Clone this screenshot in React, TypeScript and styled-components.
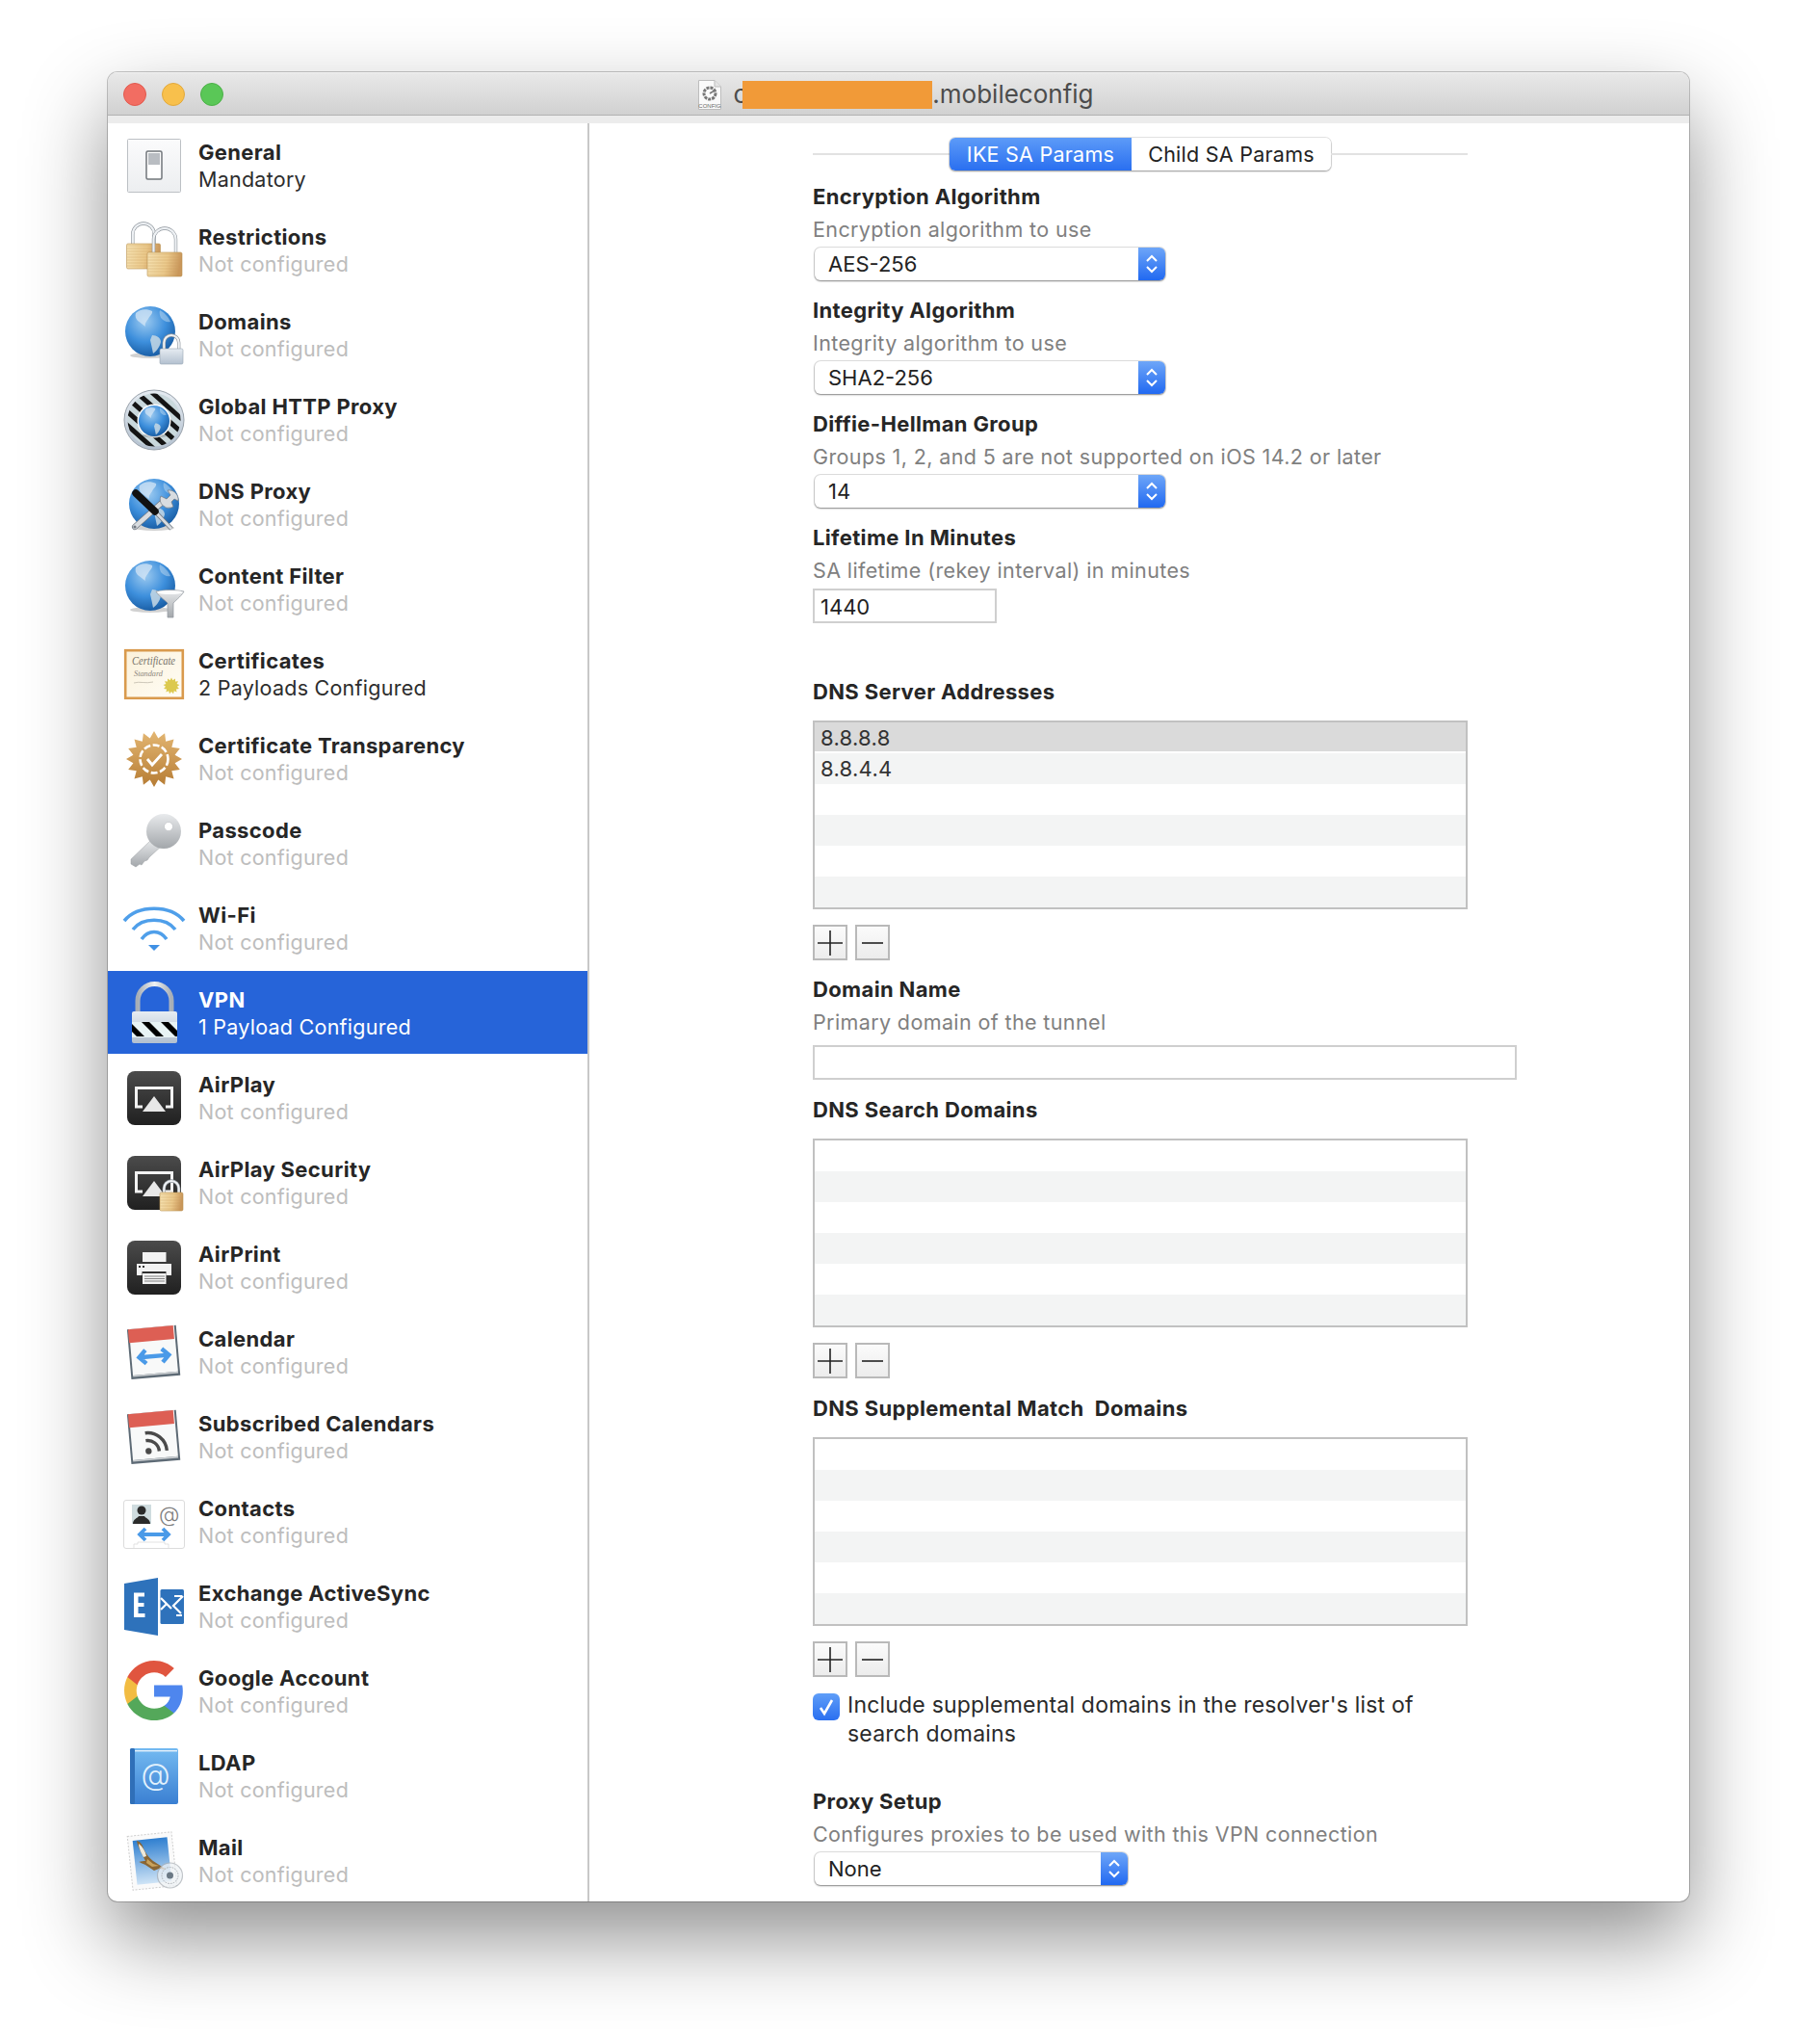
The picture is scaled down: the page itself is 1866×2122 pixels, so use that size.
import React from "react";
import styled, { createGlobalStyle } from "styled-components";

const Global = createGlobalStyle`
  html, body { margin: 0; padding: 0; background: #fff; }
  body { font-family: Inter, "Noto Sans", "Liberation Sans", sans-serif; color: #262626; }
  #root { height: 2122px; overflow: hidden; }
`;

const Page = styled.div`
  height: 2122px;
  padding: 75px 112px 0;
  box-sizing: border-box;
`;
const Window = styled.div`
  width: 1642px;
  height: 1899px;
  border-radius: 10px;
  background: #fff;
  overflow: hidden;
  display: flex;
  flex-direction: column;
  box-shadow: 0 38px 85px rgba(0, 0, 0, 0.44), 0 0 0 1px rgba(0, 0, 0, 0.22);
`;
const TitleBar = styled.header`
  flex: none;
  height: 45px;
  box-sizing: border-box;
  display: grid;
  grid-template-columns: 1fr auto 1fr;
  align-items: center;
  background: linear-gradient(#e9e9e9, #d1d1d1);
  border-bottom: 1px solid #b1b1b1;
  box-shadow: inset 0 1px 0 #f2f2f2;
`;
const Lights = styled.div`
  display: flex;
  gap: 16px;
  padding: 1px 0 0 16px;
`;
const Light = styled.span<{ $c: string; $b: string }>`
  width: 24px;
  height: 24px;
  border-radius: 50%;
  box-sizing: border-box;
  background: ${(p) => p.$c};
  border: 1px solid ${(p) => p.$b};
`;
const WindowTitle = styled.div`
  display: flex;
  align-items: center;
  font-size: 26px;
  color: #4c4c4c;
  line-height: 30px;
  padding: 2px 6px 0 0;
`;
const FileGlyph = styled.svg`
  width: 26px;
  height: 33px;
  margin-right: 11px;
`;
const Redaction = styled.span`
  display: block;
  width: 197px;
  height: 29px;
  margin-left: -5px;
  background: #f19a38;
`;
const Band = styled.div`
  flex: none;
  height: 8px;
  background: #ececec;
`;
const Main = styled.div`
  flex: 1;
  min-height: 0;
  display: flex;
`;
const Sidebar = styled.nav`
  flex: none;
  width: 500px;
  box-sizing: border-box;
  border-right: 2px solid #c8c8c8;
  overflow: hidden;
`;
const Row = styled.div<{ $sel?: boolean }>`
  display: flex;
  align-items: center;
  height: 86px;
  box-sizing: border-box;
  padding-top: 2px;
  margin-bottom: 2px;
  background: ${(p) => (p.$sel ? "#2664d9" : "transparent")};
`;
const IconSvg = styled.svg`
  flex: none;
  width: 70px;
  height: 70px;
  margin-left: 13px;
  overflow: visible;
`;
const RowText = styled.div`
  margin-left: 11px;
`;
const RowTitle = styled.div<{ $sel?: boolean }>`
  font-size: 22px;
  font-weight: 700;
  line-height: 28px;
  letter-spacing: 0.35px;
  color: ${(p) => (p.$sel ? "#fff" : "#262626")};
`;
const RowSub = styled.div<{ $tone: "off" | "on" | "sel" }>`
  font-size: 21.5px;
  line-height: 29px;
  letter-spacing: 0.25px;
  color: ${(p) => (p.$tone === "off" ? "#bdbdbd" : p.$tone === "sel" ? "#fff" : "#2d2d2d")};
`;
const Pane = styled.section`
  flex: 1;
  min-width: 0;
  padding-left: 232px;
  overflow: hidden;
`;
const TabRow = styled.div`
  width: 680px;
  height: 34px;
  margin-top: 15px;
  display: flex;
  align-items: center;
`;
const TabLine = styled.div`
  flex: 1;
  height: 2px;
  background: #e2e2e2;
`;
const Tabs = styled.div`
  display: flex;
  height: 34px;
  border-radius: 6px;
  overflow: hidden;
  box-shadow: 0 1px 2px rgba(0, 0, 0, 0.35), 0 0 0 1px rgba(0, 0, 0, 0.1);
`;
const Tab = styled.div<{ $on?: boolean }>`
  display: flex;
  align-items: center;
  justify-content: center;
  box-sizing: border-box;
  width: ${(p) => (p.$on ? 189 : 207)}px;
  font-size: 21.5px;
  letter-spacing: 0.25px;
  color: ${(p) => (p.$on ? "#fff" : "#222")};
  background: ${(p) => (p.$on ? "linear-gradient(#5d9bf8, #2a6ff0)" : "#fff")};
`;
const Heading = styled.div<{ $mt: number }>`
  margin-top: ${(p) => p.$mt}px;
  font-size: 22px;
  font-weight: 700;
  line-height: 30px;
  letter-spacing: 0.35px;
  color: #262626;
`;
const Hint = styled.div`
  margin-top: 4px;
  font-size: 21.5px;
  line-height: 30px;
  letter-spacing: 0.38px;
  color: #808080;
`;
const Select = styled.div<{ $w: number }>`
  margin: 4px 0 0 2px;
  width: ${(p) => p.$w}px;
  height: 34px;
  display: flex;
  align-items: center;
  border-radius: 6px;
  overflow: hidden;
  background: #fff;
  box-shadow: 0 1px 2px rgba(0, 0, 0, 0.4), 0 0 0 1px rgba(0, 0, 0, 0.12);
`;
const SelectValue = styled.div`
  flex: 1;
  padding-left: 14px;
  font-size: 22px;
  color: #222;
`;
const SelectArrow = styled.div`
  width: 28px;
  height: 34px;
  display: flex;
  align-items: center;
  justify-content: center;
  background: linear-gradient(#6ea6f8, #2169f1);
`;
const TextField = styled.div<{ $w: number; $mt: number }>`
  margin-top: ${(p) => p.$mt}px;
  width: ${(p) => p.$w}px;
  height: 36px;
  box-sizing: border-box;
  border: 2px solid #cfcfcf;
  padding: 1px 0 0 6px;
  font-size: 22px;
  line-height: 32px;
  color: #222;
`;
const List = styled.div<{ $mt: number }>`
  margin-top: ${(p) => p.$mt}px;
  width: 680px;
  height: 196px;
  box-sizing: border-box;
  border: 2px solid #c1c1c1;
`;
const ListRow = styled.div<{ $alt: boolean; $sel?: boolean }>`
  height: 32px;
  box-sizing: border-box;
  padding: 1px 0 0 6px;
  font-size: 22px;
  line-height: 30px;
  letter-spacing: 0.3px;
  color: #333;
  background: ${(p) => (p.$sel ? "#dadada" : p.$alt ? "#f3f4f4" : "#fff")};
  border-bottom: ${(p) => (p.$sel ? "2px solid #fff" : "none")};
`;
const Stepper = styled.div`
  margin-top: 16px;
  display: flex;
  gap: 8px;
`;
const StepButton = styled.div`
  width: 36px;
  height: 37px;
  box-sizing: border-box;
  border: 2px solid #b9b9b9;
  display: flex;
  align-items: center;
  justify-content: center;
  background: linear-gradient(#fbfbfb, #ececec);
`;
const CheckRow = styled.div`
  margin-top: 17px;
  display: flex;
  width: 640px;
`;
const CheckBox = styled.div`
  flex: none;
  width: 28px;
  height: 28px;
  border-radius: 6px;
  display: flex;
  align-items: center;
  justify-content: center;
  background: linear-gradient(#5f9ef8, #2a6ff0);
`;
const CheckLabel = styled.div`
  margin: -3px 0 0 8px;
  font-size: 23px;
  line-height: 30px;
  letter-spacing: 0.2px;
  color: #2a2a2a;
`;
const Defs = styled.svg`
  position: absolute;
  width: 0;
  height: 0;
`;

const star = (cx: number, cy: number, R: number, r: number, n: number) =>
  Array.from({ length: n * 2 }, (_, i) => {
    const a = (Math.PI * i) / n - Math.PI / 2;
    const q = i % 2 ? r : R;
    return `${(cx + q * Math.cos(a)).toFixed(1)},${(cy + q * Math.sin(a)).toFixed(1)}`;
  }).join(" ");

const SharedDefs = () => (
  <Defs aria-hidden="true">
    <defs>
      <radialGradient id="globeG" cx="40%" cy="30%" r="75%">
        <stop offset="0" stopColor="#9ccaf0" />
        <stop offset="0.55" stopColor="#3d8fdc" />
        <stop offset="1" stopColor="#15589f" />
      </radialGradient>
      <linearGradient id="goldG" x1="0" y1="0" x2="1" y2="0.15">
        <stop offset="0" stopColor="#f6e3b4" />
        <stop offset="0.6" stopColor="#ebc98b" />
        <stop offset="1" stopColor="#c9965a" />
      </linearGradient>
      <linearGradient id="silverG" x1="0" y1="0" x2="0" y2="1">
        <stop offset="0" stopColor="#e6ecf2" />
        <stop offset="1" stopColor="#b3c0cf" />
      </linearGradient>
      <linearGradient id="shackleG" x1="0" y1="0" x2="1" y2="0">
        <stop offset="0" stopColor="#a7aeb6" />
        <stop offset="0.5" stopColor="#eef1f4" />
        <stop offset="1" stopColor="#a7aeb6" />
      </linearGradient>
      <linearGradient id="darkG" x1="0" y1="0" x2="0" y2="1">
        <stop offset="0" stopColor="#4b4b4b" />
        <stop offset="1" stopColor="#202020" />
      </linearGradient>
      <linearGradient id="keyG" x1="0" y1="0" x2="0" y2="1">
        <stop offset="0" stopColor="#e8eaec" />
        <stop offset="1" stopColor="#a3a7ab" />
      </linearGradient>
      <linearGradient id="bronzeG" x1="0" y1="0" x2="0" y2="1">
        <stop offset="0" stopColor="#e3b672" />
        <stop offset="1" stopColor="#b67c34" />
      </linearGradient>
      <linearGradient id="bookG" x1="0" y1="0" x2="0" y2="1">
        <stop offset="0" stopColor="#74baf1" />
        <stop offset="1" stopColor="#3a7fd2" />
      </linearGradient>
      <linearGradient id="skyG" x1="0" y1="0" x2="0" y2="1">
        <stop offset="0" stopColor="#2f7fd0" />
        <stop offset="1" stopColor="#cfe4f6" />
      </linearGradient>
      <linearGradient id="switchG" x1="0" y1="0" x2="0" y2="1">
        <stop offset="0" stopColor="#fbfbfc" />
        <stop offset="1" stopColor="#eceef0" />
      </linearGradient>
      <linearGradient id="certG" x1="0" y1="0" x2="1" y2="1">
        <stop offset="0" stopColor="#fbf1da" />
        <stop offset="1" stopColor="#fffdf6" />
      </linearGradient>
    </defs>
  </Defs>
);

const Globe = ({ cx, cy, r }: { cx: number; cy: number; r: number }) => (
  <g transform={`translate(${cx - r} ${cy - r}) scale(${r / 26})`}>
    <ellipse cx="26" cy="51" rx="21" ry="3" fill="#000" opacity="0.18" />
    <circle cx="26" cy="26" r="26" fill="url(#globeG)" />
    <path d="M11 7C15 3 22 2 28 5c1 3-3 5-4 8-2 3-4 5-3 8-3-2-5-4-8-6C11 13 10 10 11 7Z" fill="#d4e6f6" opacity="0.75" />
    <path d="M28 30c5 0 9 3 9 7-1 5-5 10-8 12-1-5-2-10-3-14Z" fill="#c7d8e4" opacity="0.85" />
    <path d="M36 4c4 2 9 7 11 12-4 1-7-1-10-4-1-3-2-5-1-8Z" fill="#cfe2f2" opacity="0.45" />
  </g>
);
const MiniLock = ({ x, y, w, h, top, gold }: { x: number; y: number; w: number; h: number; top: number; gold?: boolean }) => (
  <g>
    <path
      d={`M${x + w * 0.18} ${y}V${top + w * 0.32}a${w * 0.32} ${w * 0.32} 0 0 1 ${w * 0.64} 0V${y}`}
      fill="none"
      stroke="#8d949b"
      strokeWidth="3.4"
    />
    <path
      d={`M${x + w * 0.18} ${y}V${top + w * 0.32}a${w * 0.32} ${w * 0.32} 0 0 1 ${w * 0.64} 0V${y}`}
      fill="none"
      stroke="#eef1f4"
      strokeWidth="2.2"
    />
    <rect x={x} y={y} width={w} height={h} rx="1.5" fill={gold ? "url(#goldG)" : "url(#silverG)"} stroke={gold ? "#b9904f" : "#97a4b3"} strokeWidth="0.6" />
    {gold &&
      Array.from({ length: Math.floor(h / 3) }, (_, i) => (
        <line key={i} x1={x + 0.5} x2={x + w - 0.5} y1={y + 2 + i * 3} y2={y + 2 + i * 3} stroke="#c99f5f" strokeWidth="0.5" opacity="0.7" />
      ))}
  </g>
);
const DoubleArrow = ({ x1, x2, y, s = 5, w = 3.4 }: { x1: number; x2: number; y: number; s?: number; w?: number }) => (
  <path
    d={`M${x1} ${y}H${x2}M${x1 + s} ${y - s}L${x1} ${y}L${x1 + s} ${y + s}M${x2 - s} ${y - s}L${x2} ${y}L${x2 - s} ${y + s}`}
    fill="none"
    stroke="#4a9ae8"
    strokeWidth={w}
  />
);
const CalendarBase = ({ children }: { children: React.ReactNode }) => (
  <g transform="rotate(-5 34 34)">
    <rect x="9" y="9" width="51" height="52" fill="#5d6a75" />
    <rect x="11" y="9" width="47" height="48" fill="#f8f9f9" />
    <rect x="11" y="57" width="47" height="1.6" fill="#c9cdd0" />
    <rect x="10" y="9" width="47" height="14" fill="#dd5f54" />
    {children}
  </g>
);

type IconName = string;
const Icon = ({ name }: { name: IconName }) => {
  switch (name) {
    case "general":
      return (
        <>
          <rect x="7.5" y="7.5" width="55" height="55" rx="1" fill="url(#switchG)" stroke="#bcc0c4" />
          <rect x="27" y="20" width="16" height="29" rx="1.5" fill="#fff" stroke="#70757a" strokeWidth="1.5" />
          <rect x="29" y="22" width="12" height="12" fill="#b9bdc2" />
        </>
      );
    case "restrictions":
      return (
        <>
          <MiniLock x={6.5} y={28} w={35} h={26} top={7} gold />
          <MiniLock x={28} y={37} w={36} h={25} top={12} gold />
        </>
      );
    case "domains":
      return (
        <>
          <Globe cx={31} cy={31} r={26} />
          <MiniLock x={41} y={49} w={24} h={16} top={35} />
        </>
      );
    case "proxy":
      return (
        <>
          <defs>
            <clipPath id="proxyClip">
              <circle cx="35" cy="35" r="27.5" />
            </clipPath>
          </defs>
          <circle cx="35" cy="35" r="31" fill="url(#silverG)" stroke="#98a1aa" />
          <g clipPath="url(#proxyClip)">
            <rect x="4" y="4" width="62" height="62" fill="#c9d8dc" />
            {[-34, -18, -2, 14, 30].map((d) => (
              <line key={d} x1={d - 10} y1="-5" x2={d + 80} y2="75" stroke="#141414" strokeWidth="5" />
            ))}
          </g>
          <circle cx="35" cy="36" r="17.5" fill="#fff" />
          <Globe cx={35} cy={36} r={16} />
        </>
      );
    case "dns":
      return (
        <>
          <Globe cx={35} cy={34} r={26} />
          <path d="M36 42L53 60" stroke="#6f7780" strokeWidth="4.4" />
          <path d="M36 42L53 60" stroke="#d8dce0" strokeWidth="2.8" />
          <path d="M15 58L44 32" stroke="#6f7780" strokeWidth="6" strokeLinecap="round" />
          <path d="M15 58L44 32" stroke="#d8dce0" strokeWidth="4.6" strokeLinecap="round" />
          <path d="M42 26a9 9 0 0 0 11 12l2-1-2-5 3-3 4 2c1-6-4-12-11-11l3 5-4 4Z" fill="#d8dce0" stroke="#6f7780" strokeWidth="0.7" />
          <path d="M16 23L36 42" stroke="#111" strokeWidth="7.5" strokeLinecap="round" />
          <circle cx="15" cy="58" r="1.6" fill="#6f7780" />
        </>
      );
    case "filter":
      return (
        <>
          <Globe cx={31} cy={31} r={26} />
          <path d="M37 37c8-2 21-2 29 0-1 3-8 9-11 12v15h-6V49c-3-3-11-9-12-12Z" fill="url(#keyG)" stroke="#8f979e" strokeWidth="0.7" />
          <ellipse cx="51.5" cy="38" rx="13" ry="2" fill="#fff" opacity="0.9" />
        </>
      );
    case "cert":
      return (
        <>
          <rect x="5.2" y="10.2" width="59.6" height="49.6" fill="url(#certG)" stroke="#d99a4d" strokeWidth="2.6" />
          <text x="12" y="25" textLength="45" lengthAdjust="spacingAndGlyphs" fontFamily="Liberation Serif, serif" fontStyle="italic" fontSize="12" fill="#77736b">
            Certificate
          </text>
          <text x="14" y="37" textLength="30" lengthAdjust="spacingAndGlyphs" fontFamily="Liberation Serif, serif" fontStyle="italic" fontSize="8.5" fill="#8d887e">
            Standard
          </text>
          <path d="M14 44c6-2 12 1 20-1" stroke="#b8b2a4" fill="none" strokeWidth="0.7" />
          <polygon points={star(53, 47, 8.5, 6, 13)} fill="#dcc94e" />
        </>
      );
    case "ct":
      return (
        <>
          <polygon points={star(35, 35, 29, 22, 16)} fill="url(#bronzeG)" />
          <circle cx="35" cy="35" r="14.5" fill="none" stroke="#fff" strokeWidth="2.6" strokeDasharray="7 2.5" />
          <path d="M28 35l5 6 10-11" fill="none" stroke="#fff" strokeWidth="2.8" />
        </>
      );
    case "passcode":
      return (
        <>
          <path d="M32 31L11 51v5l5 3 4-3 2 1 3-4 3-1 2-3 14-13Z" fill="url(#keyG)" stroke="#9a9ea2" strokeWidth="0.5" />
          <circle cx="45" cy="22" r="18" fill="url(#keyG)" />
          <circle cx="50" cy="17" r="4.5" fill="#fff" stroke="#b8bcc0" strokeWidth="0.6" />
        </>
      );
    case "wifi":
      return (
        <>
          <g fill="none" stroke="#4f9fea" strokeWidth="3.6">
            <path d="M4 27C18 10 52 10 66 27" />
            <path d="M13 36C23 23 47 23 57 36" />
            <path d="M22 46C29 36 41 36 48 46" />
          </g>
          <polygon points="29,52 41,52 35,58" fill="#3f90e4" />
        </>
      );
    case "vpn":
      return (
        <>
          <defs>
            <clipPath id="vpnClip">
              <rect x="12" y="44" width="47" height="15" />
            </clipPath>
          </defs>
          <path d="M18 34V22a17.5 17.5 0 0 1 35 0V34" fill="none" stroke="url(#shackleG)" strokeWidth="5" />
          <rect x="12" y="33" width="47" height="33" rx="2" fill="url(#silverG)" />
          <rect x="12" y="44" width="47" height="16" fill="#e8f3f5" />
          <g clipPath="url(#vpnClip)">
            {[2, 22, 42].map((d) => (
              <path key={d} d={`M${d} 44l8 0 16 16-8 0Z`} fill="#000" />
            ))}
          </g>
        </>
      );
    case "airplay":
    case "airplaysec":
      return (
        <>
          <rect x="7" y="7" width="56" height="56" rx="8" fill="url(#darkG)" />
          <path d="M23 44H16.5V24.5H53.5V44H47" fill="none" stroke="#f2f2f2" strokeWidth="3" />
          <polygon points="35,33 47,49 23,49" fill="#e7e7e7" />
          {name === "airplaysec" && <MiniLock x={41} y={45} w={24} h={19} top={33} gold />}
        </>
      );
    case "airprint":
      return (
        <>
          <rect x="7" y="7" width="56" height="56" rx="8" fill="url(#darkG)" />
          <rect x="23" y="19" width="24.5" height="10" fill="#f2f2f2" />
          <path d="M17 31H53V43H47.5V39H22.5V43H17Z" fill="#f2f2f2" />
          <rect x="23" y="41" width="24.5" height="11" fill="#f2f2f2" />
          <path d="M25 44H46M25 46.5H46M25 49H46" stroke="#555" strokeWidth="0.7" />
          <rect x="19" y="33" width="2" height="2" fill="#333" />
          <rect x="23" y="33" width="2" height="2" fill="#333" />
        </>
      );
    case "calendar":
      return (
        <CalendarBase>
          <DoubleArrow x1={19} x2={50} y={39} s={7} w={4.4} />
        </CalendarBase>
      );
    case "subscribed":
      return (
        <CalendarBase>
          <circle cx="28" cy="49" r="3.2" fill="#4a4a4a" />
          <g fill="none" stroke="#4a4a4a" strokeWidth="3.4">
            <path d="M26 38a12 12 0 0 1 13 12" />
            <path d="M26 30a20 20 0 0 1 21 20" />
          </g>
        </CalendarBase>
      );
    case "contacts":
      return (
        <>
          <rect x="3.5" y="12.5" width="63" height="50" rx="2.5" fill="#fff" stroke="#dcdcdc" />
          <rect x="12" y="17" width="20" height="20" fill="#cfdcdf" />
          <circle cx="22" cy="23" r="4.5" fill="#2b2b2b" />
          <path d="M13 37c0-5 5-6 6-8h6c1 2 6 3 6 8Z" fill="#2b2b2b" />
          <text x="40" y="34.5" fontFamily="Inter, sans-serif" fontSize="22" fontWeight="300" fill="#7d7d7d">
            @
          </text>
          <DoubleArrow x1={20} x2={50} y={48} s={6} w={3.8} />
          <path d="M14 62v-4h4v-2h28v2h4v4" fill="none" stroke="#dcdcdc" strokeWidth="0.8" />
        </>
      );
    case "exchange":
      return (
        <>
          <polygon points="4,11 39,5 39,65 4,59" fill="#2e72bb" />
          <rect x="41.5" y="17" width="24.5" height="36" rx="1.5" fill="#2e72bb" />
          <path d="M14 20.5h11v4h-6.5v6.5h6v4h-6v7h7v4H14Z" fill="#fff" />
          <path d="M42 26l6 6-6 6M65 24l-10 10 8 8M48 32l5 5M56 24l8 0M58 44l6 0" fill="none" stroke="#fff" strokeWidth="2.2" />
        </>
      );
    case "google":
      return (
        <g transform="translate(1.2 0.2) scale(1.41)">
          <path fill="#4e86ee" d="M45.12 24.5c0-1.56-.14-3.06-.4-4.5H24v8.51h11.84c-.51 2.75-2.06 5.08-4.39 6.64v5.52h7.11c4.16-3.83 6.56-9.47 6.56-16.17z" />
          <path fill="#54a85a" d="M24 46c5.94 0 10.92-1.97 14.56-5.33l-7.11-5.52c-1.97 1.32-4.49 2.1-7.45 2.1-5.73 0-10.58-3.87-12.31-9.07H4.34v5.7C7.96 41.07 15.4 46 24 46z" />
          <path fill="#f2bc42" d="M11.69 28.18C11.25 26.86 11 25.45 11 24s.25-2.86.69-4.18v-5.7H4.34C2.85 17.09 2 20.45 2 24c0 3.55.85 6.91 2.34 9.88l7.35-5.7z" />
          <path fill="#e0553f" d="M24 10.75c3.23 0 6.13 1.11 8.41 3.29l6.31-6.31C34.91 4.18 29.93 2 24 2 15.4 2 7.96 6.93 4.34 14.12l7.35 5.7c1.73-5.2 6.58-9.07 12.31-9.07z" />
        </g>
      );
    case "ldap":
      return (
        <>
          <rect x="10" y="6" width="50" height="58" rx="2" fill="url(#bookG)" />
          <rect x="10" y="6" width="5" height="58" rx="1.5" fill="#2f6fb8" />
          <rect x="15" y="8" width="44" height="1.4" fill="#e6f1fb" />
          <text x="36.5" y="44" textAnchor="middle" fontFamily="Inter, sans-serif" fontSize="31" fontWeight="300" fill="#e3f2fd">
            @
          </text>
        </>
      );
    case "mail":
      return (
        <>
          <g transform="rotate(-6 33 35)">
            <rect x="10" y="7" width="46" height="56" fill="#fafafa" stroke="#cfcfcf" strokeDasharray="2 1.5" />
            <rect x="15" y="12" width="36" height="46" fill="url(#skyG)" />
          </g>
          <path d="M17 14c4 1 6 4 7 8 3 6 6 10 10 13l14 9-8-1-5 2-9-6c-3-1-6-3-7-3 3-1 5-1 7-1-3-7-8-14-9-21Z" fill="#8a6634" />
          <path d="M19 17c4 3 7 8 8 13l-3 1c-2-4-5-9-5-14Z" fill="#efe9dc" />
          <path d="M28 33l6 5 6 2-7 1-6-4Z" fill="#c9a25c" />
          <circle cx="51.5" cy="50" r="13" fill="#eef2f5" opacity="0.72" stroke="#a9afb5" strokeWidth="1.2" />
          <circle cx="51.5" cy="50" r="8.5" fill="none" stroke="#a9afb5" strokeWidth="1" strokeDasharray="1.6 1.2" />
          <circle cx="51.5" cy="50" r="3.5" fill="#6b7985" />
        </>
      );
    default:
      return null;
  }
};

const items = [
  ["general", "General", "Mandatory", "on"],
  ["restrictions", "Restrictions", "Not configured", "off"],
  ["domains", "Domains", "Not configured", "off"],
  ["proxy", "Global HTTP Proxy", "Not configured", "off"],
  ["dns", "DNS Proxy", "Not configured", "off"],
  ["filter", "Content Filter", "Not configured", "off"],
  ["cert", "Certificates", "2 Payloads Configured", "on"],
  ["ct", "Certificate Transparency", "Not configured", "off"],
  ["passcode", "Passcode", "Not configured", "off"],
  ["wifi", "Wi-Fi", "Not configured", "off"],
  ["vpn", "VPN", "1 Payload Configured", "sel"],
  ["airplay", "AirPlay", "Not configured", "off"],
  ["airplaysec", "AirPlay Security", "Not configured", "off"],
  ["airprint", "AirPrint", "Not configured", "off"],
  ["calendar", "Calendar", "Not configured", "off"],
  ["subscribed", "Subscribed Calendars", "Not configured", "off"],
  ["contacts", "Contacts", "Not configured", "off"],
  ["exchange", "Exchange ActiveSync", "Not configured", "off"],
  ["google", "Google Account", "Not configured", "off"],
  ["ldap", "LDAP", "Not configured", "off"],
  ["mail", "Mail", "Not configured", "off"],
] as const;

const Chevrons = () => (
  <svg width="16" height="24" viewBox="0 0 16 24" fill="none" stroke="#fff" strokeWidth="2">
    <path d="M3 9l5-5 5 5M3 15l5 5 5-5" />
  </svg>
);
const SelectBox = ({ value, w }: { value: string; w: number }) => (
  <Select $w={w}>
    <SelectValue>{value}</SelectValue>
    <SelectArrow>
      <Chevrons />
    </SelectArrow>
  </Select>
);
const DataList = ({ values = [], mt }: { values?: string[]; mt: number }) => (
  <List $mt={mt}>
    {Array.from({ length: 6 }, (_, i) => (
      <ListRow key={i} $alt={i % 2 === 1} $sel={values.length > 0 && i === 0}>
        {values[i] ?? ""}
      </ListRow>
    ))}
  </List>
);
const Steppers = () => (
  <Stepper>
    <StepButton>
      <svg width="26" height="26" viewBox="0 0 26 26" stroke="#222" strokeWidth="1.6">
        <path d="M13 0V26M0 13H26" />
      </svg>
    </StepButton>
    <StepButton>
      <svg width="24" height="26" viewBox="0 0 24 26" stroke="#222" strokeWidth="1.6">
        <path d="M1 13H23" />
      </svg>
    </StepButton>
  </Stepper>
);

export default function App() {
  return (
    <Page>
      <Global />
      <SharedDefs />
      <Window>
        <TitleBar>
          <Lights>
            <Light $c="#f26d62" $b="#e25a4f" />
            <Light $c="#f8c04c" $b="#e2a93c" />
            <Light $c="#5ac757" $b="#4cb148" />
          </Lights>
          <WindowTitle>
            <FileGlyph viewBox="0 0 26 33">
              <path d="M1.5 1.5H18L24.5 8V31.5H1.5Z" fill="#fafafa" stroke="#bdbdbd" />
              <path d="M18 1.5V8H24.5" fill="#e4e4e4" stroke="#bdbdbd" />
              <circle cx="13" cy="15" r="6" fill="none" stroke="#777" strokeWidth="3" strokeDasharray="3 1" />
              <path d="M13 15L18 12" stroke="#777" strokeWidth="1.5" />
              <text x="13" y="30" textAnchor="middle" fontFamily="Liberation Sans, sans-serif" fontSize="6" fill="#666">
                CONFIG
              </text>
            </FileGlyph>
            <span>c</span>
            <Redaction />
            <span>.mobileconfig</span>
          </WindowTitle>
          <span />
        </TitleBar>
        <Band />
        <Main>
          <Sidebar>
            {items.map(([key, title, sub, tone]) => (
              <Row key={key} $sel={tone === "sel"}>
                <IconSvg viewBox="0 0 70 70">
                  <Icon name={key} />
                </IconSvg>
                <RowText>
                  <RowTitle $sel={tone === "sel"}>{title}</RowTitle>
                  <RowSub $tone={tone}>{sub}</RowSub>
                </RowText>
              </Row>
            ))}
          </Sidebar>
          <Pane>
            <TabRow>
              <TabLine />
              <Tabs>
                <Tab $on>IKE SA Params</Tab>
                <Tab>Child SA Params</Tab>
              </Tabs>
              <TabLine />
            </TabRow>
            <Heading $mt={12}>Encryption Algorithm</Heading>
            <Hint>Encryption algorithm to use</Hint>
            <SelectBox value="AES-256" w={364} />
            <Heading $mt={16}>Integrity Algorithm</Heading>
            <Hint>Integrity algorithm to use</Hint>
            <SelectBox value="SHA2-256" w={364} />
            <Heading $mt={16}>Diffie-Hellman Group</Heading>
            <Hint>Groups 1, 2, and 5 are not supported on iOS 14.2 or later</Hint>
            <SelectBox value="14" w={364} />
            <Heading $mt={16}>Lifetime In Minutes</Heading>
            <Hint>SA lifetime (rekey interval) in minutes</Hint>
            <TextField $w={191} $mt={4}>
              1440
            </TextField>
            <Heading $mt={56}>DNS Server Addresses</Heading>
            <DataList values={["8.8.8.8", "8.8.4.4"]} mt={15} />
            <Steppers />
            <Heading $mt={15}>Domain Name</Heading>
            <Hint>Primary domain of the tunnel</Hint>
            <TextField $w={731} $mt={9}>
              {""}
            </TextField>
            <Heading $mt={16}>DNS Search Domains</Heading>
            <DataList mt={15} />
            <Steppers />
            <Heading $mt={16}>DNS Supplemental Match&nbsp; Domains</Heading>
            <DataList mt={15} />
            <Steppers />
            <CheckRow>
              <CheckBox>
                <svg width="20" height="20" viewBox="0 0 20 20" fill="none" stroke="#fff" strokeWidth="2.6">
                  <path d="M4 11l4 6 8-14" />
                </svg>
              </CheckBox>
              <CheckLabel>Include supplemental domains in the resolver's list of search domains</CheckLabel>
            </CheckRow>
            <Heading $mt={40}>Proxy Setup</Heading>
            <Hint>Configures proxies to be used with this VPN connection</Hint>
            <SelectBox value="None" w={325} />
          </Pane>
        </Main>
      </Window>
    </Page>
  );
}
